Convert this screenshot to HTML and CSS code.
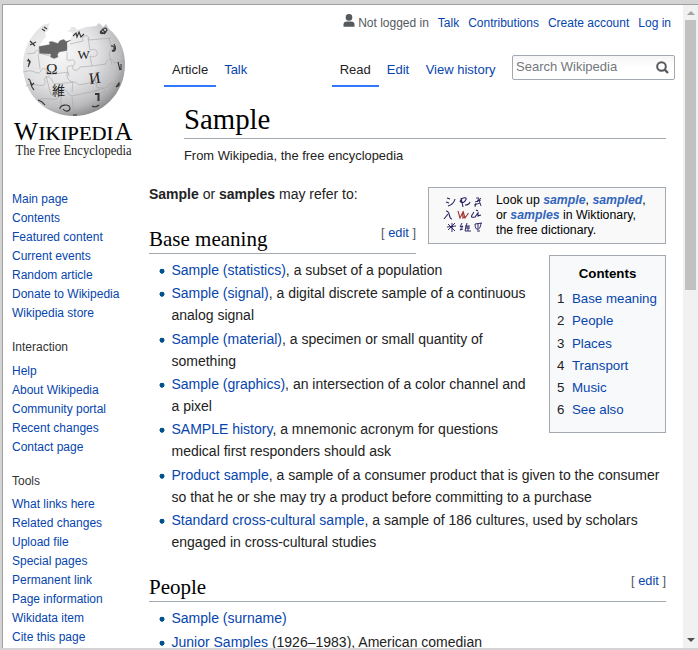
FILE: index.html
```html
<!DOCTYPE html>
<html lang="en">
<head>
<meta charset="utf-8">
<title>Sample - Wikipedia</title>
<link rel="stylesheet" href="styles.css">
</head>
<body>
<div class="window">
<div class="viewport">
<aside class="sidebar">
<a class="logo" href="#" aria-label="Wikipedia">
<svg class="globe" width="106" height="96" viewBox="21 22 106 96">
<defs><radialGradient id="g" cx=".36" cy=".32" r=".74"><stop offset="0" stop-color="#f8f8f8"/><stop offset=".5" stop-color="#e2e2e4"/><stop offset=".8" stop-color="#bcbcbe"/><stop offset="1" stop-color="#858587"/></radialGradient></defs>
<path d="M43 25L50 23 48 27 49 29 45 33 46 37 43 40 39 47 50 50 66 48 71 40 71 37 74 35 71 32 66 31 70 30 71 27 75 27 77 30 86 27 96 26 99 23 103 27 106 24 109 29C120 38 125 51 125 64 125 94 102 116 74 116 45 116 23 94 23 65 23 49 31 34 43 25z" fill="url(#g)"/>
<path d="M39 46.500L50 44.500 49 42 52 41.500 58 43.500 60 40.500 64 39.500 66 41.500 71 40 67 42.500 67 50.500 59 52 57.500 54.500 58 57 54 58.500 50.500 57 51 54 39.500 53.500z" fill="#666" stroke="#777" stroke-width=".4"/>
<g fill="none" stroke="#a4a4a6" stroke-width=".6">
<path d="M27 54l8-1c0-4 5-3 4 0l11 3M23 72c9-2 9-1 14 1 5 1 3-6 8-4 4 2-1 5 3 6l20-3M26 86c8-4 12 1 18-1 3-3-2-7 3-8 6-1 4 6 8 7l20-2 4 3q10-1 17-5M38 100c10-4 15 2 20-2 3-4-2-8 4-9 6 0 5 6 10 7l28-6M38 54l2 15M46 76l5 19M67 72q-1 9 6 10l-1 10M67 52l0 8c5 1 7-2 8 3 0 4-8 2-8 5l2 8M70 44l13-3c-2-7 7-7 6-1l22-2M88 38l2 12c7-2 8 2 7 5-3 3-7 1-7 1l2 10-12 1c-2 5-9 4-7-1M92 66l14-2c0-6 8-6 8-1l11-2M95 79l2 9c5-1 9 0 7 4l-6 2 1 14M94 91l14-4c0-5 7-5 7 0l6-4M109 38l3 11-3 4 3 12M72 97l2 17M61 90l0 22"/>
</g>
<g fill="#222" font-family="Liberation Serif, Noto Sans CJK JP, serif">
<text x="46" y="73.500" font-size="15.500">Ω</text><text x="77.500" y="59" font-size="13">W</text><text x="89" y="83.500" font-size="16" transform="rotate(-8 94 78)">И</text><text x="52" y="95" font-size="13" font-family="Noto Sans CJK JP, sans-serif">維</text>
</g>
<g fill="none" stroke="#333" stroke-width="1.100">
<path d="M30 41l5 5M30 45l6-3M28 59q3 3 0 8M27 61c4-2 4 3 1 3M28 79c4 0 1 6 6 11M30 81l2 4 2-2M38 100q4 1 7 5M60 109c-1-4 9-6 10-1 0 4-5 4-7 1M73 115l4 0M92 106q4 2 7-1M111 46c4-1 4 4 1 5M114 44c3 5 1 8-2 7M118 62l2 8M121 64l0 6M116 87q4-1 3-4l-3 4M42 29l3 2M44 27l3 2M100 31l5 3M102 29l4 4M100 33q5-8 7-3-3 5-7 3M73 36l3-3 1 4 2-5 2 5 3-3"/>
<path d="M95 94h3.500v7" stroke-width="2"/>
</g>
</svg>
<svg class="wordmark" width="126" height="42" viewBox="0 0 126 42" font-family="Liberation Serif, serif" fill="#000"><text x="2" y="20" font-size="25" textLength="24" lengthAdjust="spacingAndGlyphs">W</text><text x="26.500" y="20" font-size="19" textLength="75" lengthAdjust="spacingAndGlyphs" stroke="#000" stroke-width=".2">IKIPEDI</text><text x="102.500" y="20" font-size="25" textLength="18" lengthAdjust="spacingAndGlyphs">A</text><text x="3.500" y="34.500" font-size="14" textLength="116" lengthAdjust="spacingAndGlyphs" fill="#222">The Free Encyclopedia</text></svg>
</a>
<nav>
<ul class="links first"><li><a href="#">Main page</a></li><li><a href="#">Contents</a></li><li><a href="#">Featured content</a></li><li><a href="#">Current events</a></li><li><a href="#">Random article</a></li><li><a href="#">Donate to Wikipedia</a></li><li><a href="#">Wikipedia store</a></li></ul>
<h3>Interaction</h3>
<ul class="links"><li><a href="#">Help</a></li><li><a href="#">About Wikipedia</a></li><li><a href="#">Community portal</a></li><li><a href="#">Recent changes</a></li><li><a href="#">Contact page</a></li></ul>
<h3>Tools</h3>
<ul class="links"><li><a href="#">What links here</a></li><li><a href="#">Related changes</a></li><li><a href="#">Upload file</a></li><li><a href="#">Special pages</a></li><li><a href="#">Permanent link</a></li><li><a href="#">Page information</a></li><li><a href="#">Wikidata item</a></li><li><a href="#">Cite this page</a></li></ul>
</nav>
</aside>
<div class="main">
<header>
<div class="personal"><span class="anon"><svg width="12" height="13" viewBox="0 0 12 13" fill="#54595d"><circle cx="6" cy="3.400" r="3.300"/><path d="M.5 12.700V10.500Q.5 7.600 4 7.600H8Q11.500 7.600 11.500 10.500V12.700Z"/></svg>Not logged in</span><a href="#">Talk</a><a href="#">Contributions</a><a href="#">Create account</a><a href="#">Log in</a></div>
<div class="tabs"><a class="tab on" href="#">Article</a><a class="tab" href="#">Talk</a><span class="gap"></span><a class="tab on" href="#">Read</a><a class="tab" href="#">Edit</a><a class="tab history" href="#">View history</a>
<div class="search"><span>Search Wikipedia</span><svg width="13" height="13" viewBox="0 0 13 13" fill="none" stroke="#54595d"><circle cx="5.500" cy="5.500" r="4.300" stroke-width="2"/><path d="M8.500 8.500L12 12" stroke-width="2.400"/></svg></div></div>
</header>
<div class="heading"><h1>Sample</h1><p>From Wikipedia, the free encyclopedia</p></div>
<article>
<div class="wikt">
<svg width="41" height="41" viewBox="0 0 41 41" fill="none" stroke="#252060" stroke-width="1.100">
<path d="M4 4l3 1M3 8l3 1M5 12q6-2 7-7M18 4l2 9M17 8c2-6 9-5 5-1-2 3-6 1-4 0M22 11q4 0 5-3"/>
<path d="M33 4h3l-2 4 4-4M32 8l6-2M31 11l6-2M36 6l2 6M33 9l-1 4" stroke-width=".9"/>
<path d="M3 17c5 0 2 8 6 8M5 20l-4 5M31 18c-3 4-4 6 1 5l3-4 0 3 3-1M33 16l2 1"/>
<path d="M15 17l2 7 2.500-5 .5 5 2-2M20 17l2 7 3.500-5" stroke="#a23434"/>
<path d="M4 33l9-1M9 29l0 9M5 30l7 7M12 29l-7 7M19 29l-2 4 3-1-3 4 3-1M24 29l-2 8M22 32h5M22 34h5M22 37h6M25 32v5M32 30l7-1M32 30c0 7 5 8 6-1M35 30v5M34 37h3" stroke-width=".95"/>
</svg>
<div>Look up <b><a href="#">sample</a></b>, <b><a href="#">sampled</a></b>,<br>or <b><a href="#">samples</a></b> in Wiktionary,<br>the free dictionary.</div>
</div>
<div class="toc"><h4>Contents</h4><ol><li><span>1</span><a href="#">Base meaning</a></li><li><span>2</span><a href="#">People</a></li><li><span>3</span><a href="#">Places</a></li><li><span>4</span><a href="#">Transport</a></li><li><span>5</span><a href="#">Music</a></li><li><span>6</span><a href="#">See also</a></li></ol></div>
<p class="intro"><b>Sample</b> or <b>samples</b> may refer to:</p>
<h2>Base meaning<span class="edit">[ <a href="#">edit</a> ]</span></h2>
<ul class="list">
<li><a href="#">Sample (statistics)</a>, a subset of a population</li>
<li><a href="#">Sample (signal)</a>, a digital discrete sample of a continuous analog signal</li>
<li><a href="#">Sample (material)</a>, a specimen or small quantity of something</li>
<li><a href="#">Sample (graphics)</a>, an intersection of a color channel and a pixel</li>
<li><a href="#">SAMPLE history</a>, a mnemonic acronym for questions medical first responders should ask</li>
<li><a href="#">Product sample</a>, a sample of a consumer product that is given to the consumer so that he or she may try a product before committing to a purchase</li>
<li><a href="#">Standard cross-cultural sample</a>, a sample of 186 cultures, used by scholars engaged in cross-cultural studies</li>
</ul>
<h2 class="second">People<span class="edit">[ <a href="#">edit</a> ]</span></h2>
<ul class="list people"><li><a href="#">Sample (surname)</a></li><li><a href="#">Junior Samples</a> (1926–1983), American comedian</li></ul>
</article>
</div>
<div class="scrollbar"><i class="up"></i><i class="thumb"></i><i class="down"></i></div>
</div>
</div>
</body>
</html>
```
FILE: styles.css
```css
* { box-sizing: border-box; }
body { margin: 0; font-family: "Liberation Sans", Arial, sans-serif; color: #222; }
a { color: #0645ad; text-decoration: none; }
ul, ol { list-style: none; margin: 0; padding: 0; }
.window { height: 650px; background: #d4d4d4; padding: 4px 0 2px 2px; overflow: hidden; }
.viewport { height: 644px; display: flex; background: #fff; border-top: 1px solid #a0a0a0; border-left: 1px solid #a0a0a0; overflow: hidden; }
.sidebar { width: 146px; flex: none; padding: 17px 0 0 9px; }
.logo { display: block; height: 156px; }
.globe { display: block; margin: 0 0 0 9px; }
.wordmark { display: block; margin-top: 2px; }
.links { font-size: 12px; line-height: 19px; }
.links.first { margin-top: 12px; }
.sidebar h3 { margin: 16px 0 5.500px; font-size: 12px; line-height: 17px; font-weight: normal; color: #333; }
.main { width: 534px; flex: none; }
header { height: 82px; padding-left: 15px; }
.personal { display: flex; justify-content: flex-end; gap: 9px; padding: 9px 12px 0 0; height: 50px; font-size: 12px; line-height: 18px; }
.anon { display: flex; gap: 3px; color: #54595d; }
.tabs { display: flex; height: 32px; font-size: 13px; }
.tab { padding: 6px 8px 0; line-height: 18px; height: 32px; white-space: nowrap; }
.tab.on { color: #222; border-bottom: 2px solid #37f; }
.tab.history { padding-left: 8.500px; }
.gap { flex: 1; }
.search { width: 163px; height: 25px; margin: 0 8px 0 8.500px; border: 1px solid #a2a9b1; border-radius: 2px; padding: 0 5px 2px 3px; display: flex; align-items: center; justify-content: space-between; color: #72777d; background: linear-gradient(#f6f6f6, #fff 50%); }
.search svg { position: relative; top: 1px; }
.heading { margin: 14px 17px 0 35px; }
h1 { margin: 0; height: 38px; font: 28.800px/36px "Liberation Serif", serif; color: #000; border-bottom: 1px solid #a2a9b1; }
.heading p { margin: 8px 0 0; font-size: 12.900px; line-height: 17px; }
article { margin: 19px 17px 0 0; font-size: 14px; line-height: 22px; }
.intro { margin: 0; }
.wikt { float: right; width: 238px; height: 57px; margin: 4px 0 11px 12px; border: 1px solid #a2a9b1; background: #f9f9f9; display: flex; padding: 5px 0 0 14px; gap: 12px; font-size: 12.300px; line-height: 15px; color: #000; }
.wikt svg { margin-top: 1px; }
.wikt a { font-style: italic; color: #36b; }
.toc { float: right; clear: right; width: 117px; height: 178px; margin: 0 0 0 14px; border: 1px solid #a2a9b1; background: #f8f9fa; padding: 7px; font-size: 13.300px; }
.toc h4 { margin: 0; font-size: 13.300px; line-height: 22px; text-align: center; color: #000; }
.toc ol { margin-top: 3px; line-height: 22.250px; white-space: nowrap; }
.toc li { display: flex; gap: 7.500px; }
h2 { margin: 20px 0 0; font: 21px/28px "Liberation Serif", serif; color: #000; border-bottom: 1px solid #a2a9b1; overflow: hidden; height: 29px; }
.edit { float: right; font: 12.800px/16px "Liberation Sans", sans-serif; color: #54595d; }
.list { padding-top: 5px; }
.list li { padding-left: 22.500px; margin-bottom: 1.350px; background: radial-gradient(circle at 13px 12.200px, #00528c 2.200px, transparent 2.800px); }
h2.second { margin-top: 20px; }
.people li { margin-bottom: 2px; }
.scrollbar { width: 15px; flex: none; background: #f1f1f1; display: flex; flex-direction: column; align-items: center; }
.scrollbar .up { border: 4px solid transparent; border-top: 0; border-bottom: 4px solid #a3a3a3; margin-top: 6px; }
.thumb { width: 11px; height: 270px; background: #c1c1c1; margin-top: 5px; }
.down { border: 4px solid transparent; border-bottom: 0; border-top: 4px solid #505050; margin-top: auto; margin-bottom: 6px; }
```
